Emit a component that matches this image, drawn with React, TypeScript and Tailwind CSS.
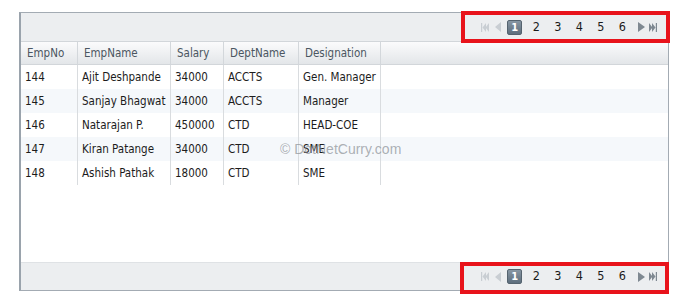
import React from "react";

const rows = [
  ["144", "Ajit Deshpande", "34000", "ACCTS", "Gen. Manager"],
  ["145", "Sanjay Bhagwat", "34000", "ACCTS", "Manager"],
  ["146", "Natarajan P.", "450000", "CTD", "HEAD-COE"],
  ["147", "Kiran Patange", "34000", "CTD", "SME"],
  ["148", "Ashish Pathak", "18000", "CTD", "SME"],
];

const headers = ["EmpNo", "EmpName", "Salary", "DeptName", "Designation"];
const widths = ["w-[57px]", "w-[93px]", "w-[53px]", "w-[75px]", "w-[82px]"];

const First = ({ color }: { color: string }) => (
  <svg width="8" height="9" viewBox="0 0 8 9">
    <rect x="0" y="0" width="1.2" height="9" fill={color} />
    <path d="M5 0 L1.5 4.5 L5 9 Z" fill={color} />
    <path d="M8 0 L4.5 4.5 L8 9 Z" fill={color} />
  </svg>
);

const Prev = ({ color }: { color: string }) => (
  <svg width="6" height="10" viewBox="0 0 6 10">
    <path d="M6 0 L0 5 L6 10 Z" fill={color} />
  </svg>
);

const Next = ({ color }: { color: string }) => (
  <svg width="7" height="10" viewBox="0 0 7 10">
    <path d="M0 0 L7 5 L0 10 Z" fill={color} />
  </svg>
);

const Last = ({ color }: { color: string }) => (
  <svg width="8" height="9" viewBox="0 0 8 9">
    <path d="M0 0 L3.5 4.5 L0 9 Z" fill={color} />
    <path d="M3 0 L6.5 4.5 L3 9 Z" fill={color} />
    <rect x="6.8" y="0" width="1.2" height="9" fill={color} />
  </svg>
);

const Pager = () => (
  <div className="flex items-center h-full pr-[9px]">
    <div className="w-[13px] flex justify-center">
      <First color="#c9ced3" />
    </div>
    <div className="w-[13px] flex justify-center">
      <Prev color="#c9ced3" />
    </div>
    <div className="w-[21.5px] flex justify-center">
      <div className="w-[15px] h-[15px] rounded-[2px] bg-gradient-to-b from-[#8796a3] to-[#5d6e7d] border border-[#55636f] text-white text-[11px] font-bold flex items-center justify-center leading-none">
        1
      </div>
    </div>
    {["2", "3", "4", "5", "6"].map((n) => (
      <div key={n} className="w-[21.5px] text-center text-[12.5px] text-[#1a1a1a]">
        {n}
      </div>
    ))}
    <div className="w-[12px] flex justify-center ml-[2px]">
      <Next color="#7e8891" />
    </div>
    <div className="w-[12px] flex justify-center">
      <Last color="#7e8891" />
    </div>
  </div>
);

export default function App() {
  return (
    <div
      className="relative w-[680px] h-[294px] bg-white overflow-hidden pl-[19px] pt-[12px]"
      style={{ fontFamily: '"DejaVu Sans Condensed", "DejaVu Sans", Verdana, sans-serif' }}
    >
      <div className="w-[650px] h-[279px] border border-[#a3abb3] border-l-2 border-l-[#9aa3ac] flex flex-col bg-white">
        <div className="h-[28px] bg-[#eceef0] flex justify-end">
          <Pager />
        </div>
        <div className="h-[24px] flex bg-gradient-to-b from-[#fbfbfc] to-[#e3e6e9] border-t border-b border-[#d2d6da] text-[11.5px] text-[#4b5661]">
          {headers.map((h, i) => (
            <div key={h} className={`${widths[i]} border-r border-[#d3d7db] flex items-center pl-[6px] pt-[2px]`}>
              {h}
            </div>
          ))}
          <div className="flex-1" />
        </div>
        <div className="flex flex-col text-[11.5px] text-[#1c1c1c]">
          {rows.map((r, ri) => (
            <div key={r[0]} className={`h-[24px] flex ${ri % 2 === 1 ? "bg-[#f5f8fb]" : "bg-white"}`}>
              {r.map((c, ci) => (
                <div key={ci} className={`${widths[ci]} border-r border-[#d9dcdf] flex items-center pl-[4px] pt-[2px] whitespace-nowrap`}>
                  {c}
                </div>
              ))}
              <div className="flex-1" />
            </div>
          ))}
        </div>
        <div className="flex-1" />
        <div className="h-[28px] bg-[#eceef0] border-t border-[#dfe2e5] flex justify-end">
          <Pager />
        </div>
      </div>

      <div className="absolute left-[280px] top-[139px] text-[14px] text-[#8a8f95]/70" style={{ fontFamily: '"Liberation Sans", Arial, sans-serif' }}>
        © DotNetCurry.com
      </div>

      <div className="absolute left-[461px] top-[11px] w-[209px] h-[32px] border-[4px] border-[#e8131b]" />
      <div className="absolute left-[460px] top-[262px] w-[209px] h-[32px] border-[4px] border-[#e8131b]" />
    </div>
  );
}
